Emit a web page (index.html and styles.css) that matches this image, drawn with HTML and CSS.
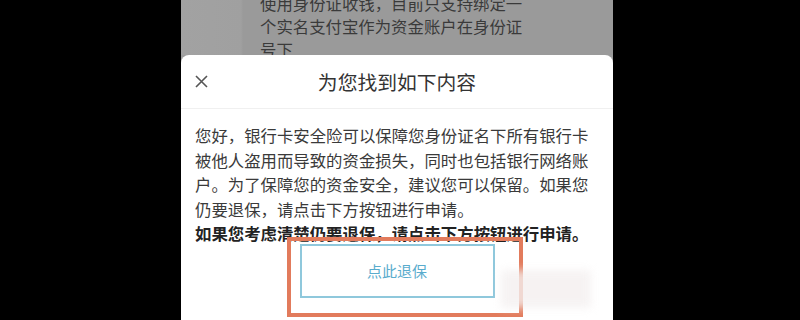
FILE: index.html
```html
<!DOCTYPE html>
<html>
<head lang="zh">
    <meta charset="UTF-8">
    <title>退保</title>
    <link rel="stylesheet" href="styles.css">
</head>
<body>
<div id="phone">
    <div class="behind">
        <p>使用身份证收钱，目前只支持绑定一</p>
        <p>个实名支付宝作为资金账户在身份证</p>
        <p>号下</p>
    </div>
    <div class="sheet">
        <div class="sheet-head">
            <span class="close">
                <svg width="13" height="13" viewBox="0 0 13 13">
                    <path d="M1 1 L12 12 M12 1 L1 12" stroke="#555" stroke-width="1.6" fill="none"/>
                </svg>
            </span>
            <h1>为您找到如下内容</h1>
        </div>
        <div class="sheet-body">
            <p class="msg">您好，银行卡安全险可以保障您身份证名下所有银行卡被他人盗用而导致的资金损失，同时也包括银行网络账户。为了保障您的资金安全，建议您可以保留。如果您仍要退保，请点击下方按钮进行申请。</p>
            <p class="msg strong">如果您考虑清楚仍要退保，请点击下方按钮进行申请。</p>
            <div class="btn-row">
                <a class="btn" href="#">点此退保</a>
            </div>
        </div>
    </div>
    <div class="mark"></div>
    <div class="smudge"></div>
</div>
</body>
</html>
```

FILE: styles.css
```css
*{
    padding: 0;
    margin: 0;
}
a{
    text-decoration: none;
}
body{
    background-color: #000;
    padding-left: 181px;
    font-family: "Noto Sans CJK SC", "Noto Sans", sans-serif;
}
#phone{
    width: 432px;
    height: 320px;
    overflow: hidden;
    position: relative;
    background-color: #9d9d9d;
}
.behind{
    height: 55px;
    padding-left: 79px;
    overflow: hidden;
    background: linear-gradient(to right, #a2a2a2 0, #a0a0a0 60px, #9a9a9a 62px, #9a9a9a 100%);
}
.behind p{
    font-size: 16.4px;
    line-height: 23px;
    color: #3a3a3a;
}
.behind p:first-child{
    margin-top: -8px;
}
.sheet{
    background-color: #fff;
    border-radius: 8px 8px 0 0;
    height: 265px;
}
.sheet-head{
    height: 53px;
    border-bottom: 1px solid #f0f0f0;
    display: flex;
    align-items: center;
    justify-content: center;
    position: relative;
}
.close{
    position: absolute;
    left: 14px;
    top: 20px;
    width: 13px;
    height: 13px;
}
.close svg{
    display: block;
}
.sheet-head h1{
    font-size: 19.8px;
    font-weight: 400;
    color: #333;
    letter-spacing: 0;
}
.sheet-body{
    padding: 14px 14px 0 14px;
}
.msg{
    width: 396px;
    font-size: 16.4px;
    line-height: 24.5px;
    color: #3a3a3a;
}
.strong{
    font-weight: 700;
    color: #222;
}
.btn-row{
    display: flex;
    justify-content: center;
    margin-top: -2px;
}
.btn{
    width: 195px;
    height: 54px;
    box-sizing: border-box;
    border: 2px solid #8fc8dc;
    display: flex;
    align-items: center;
    justify-content: center;
    font-size: 15px;
    color: #5aaccd;
}
.mark{
    position: absolute;
    left: 106px;
    top: 237px;
    width: 236px;
    height: 80px;
    box-sizing: border-box;
    border: 4px solid #e27b5c;
}
.smudge{
    position: absolute;
    left: 320px;
    top: 270px;
    width: 90px;
    height: 38px;
    background-color: #f4f0f0;
    filter: blur(4px);
    opacity: 0.8;
}
```
